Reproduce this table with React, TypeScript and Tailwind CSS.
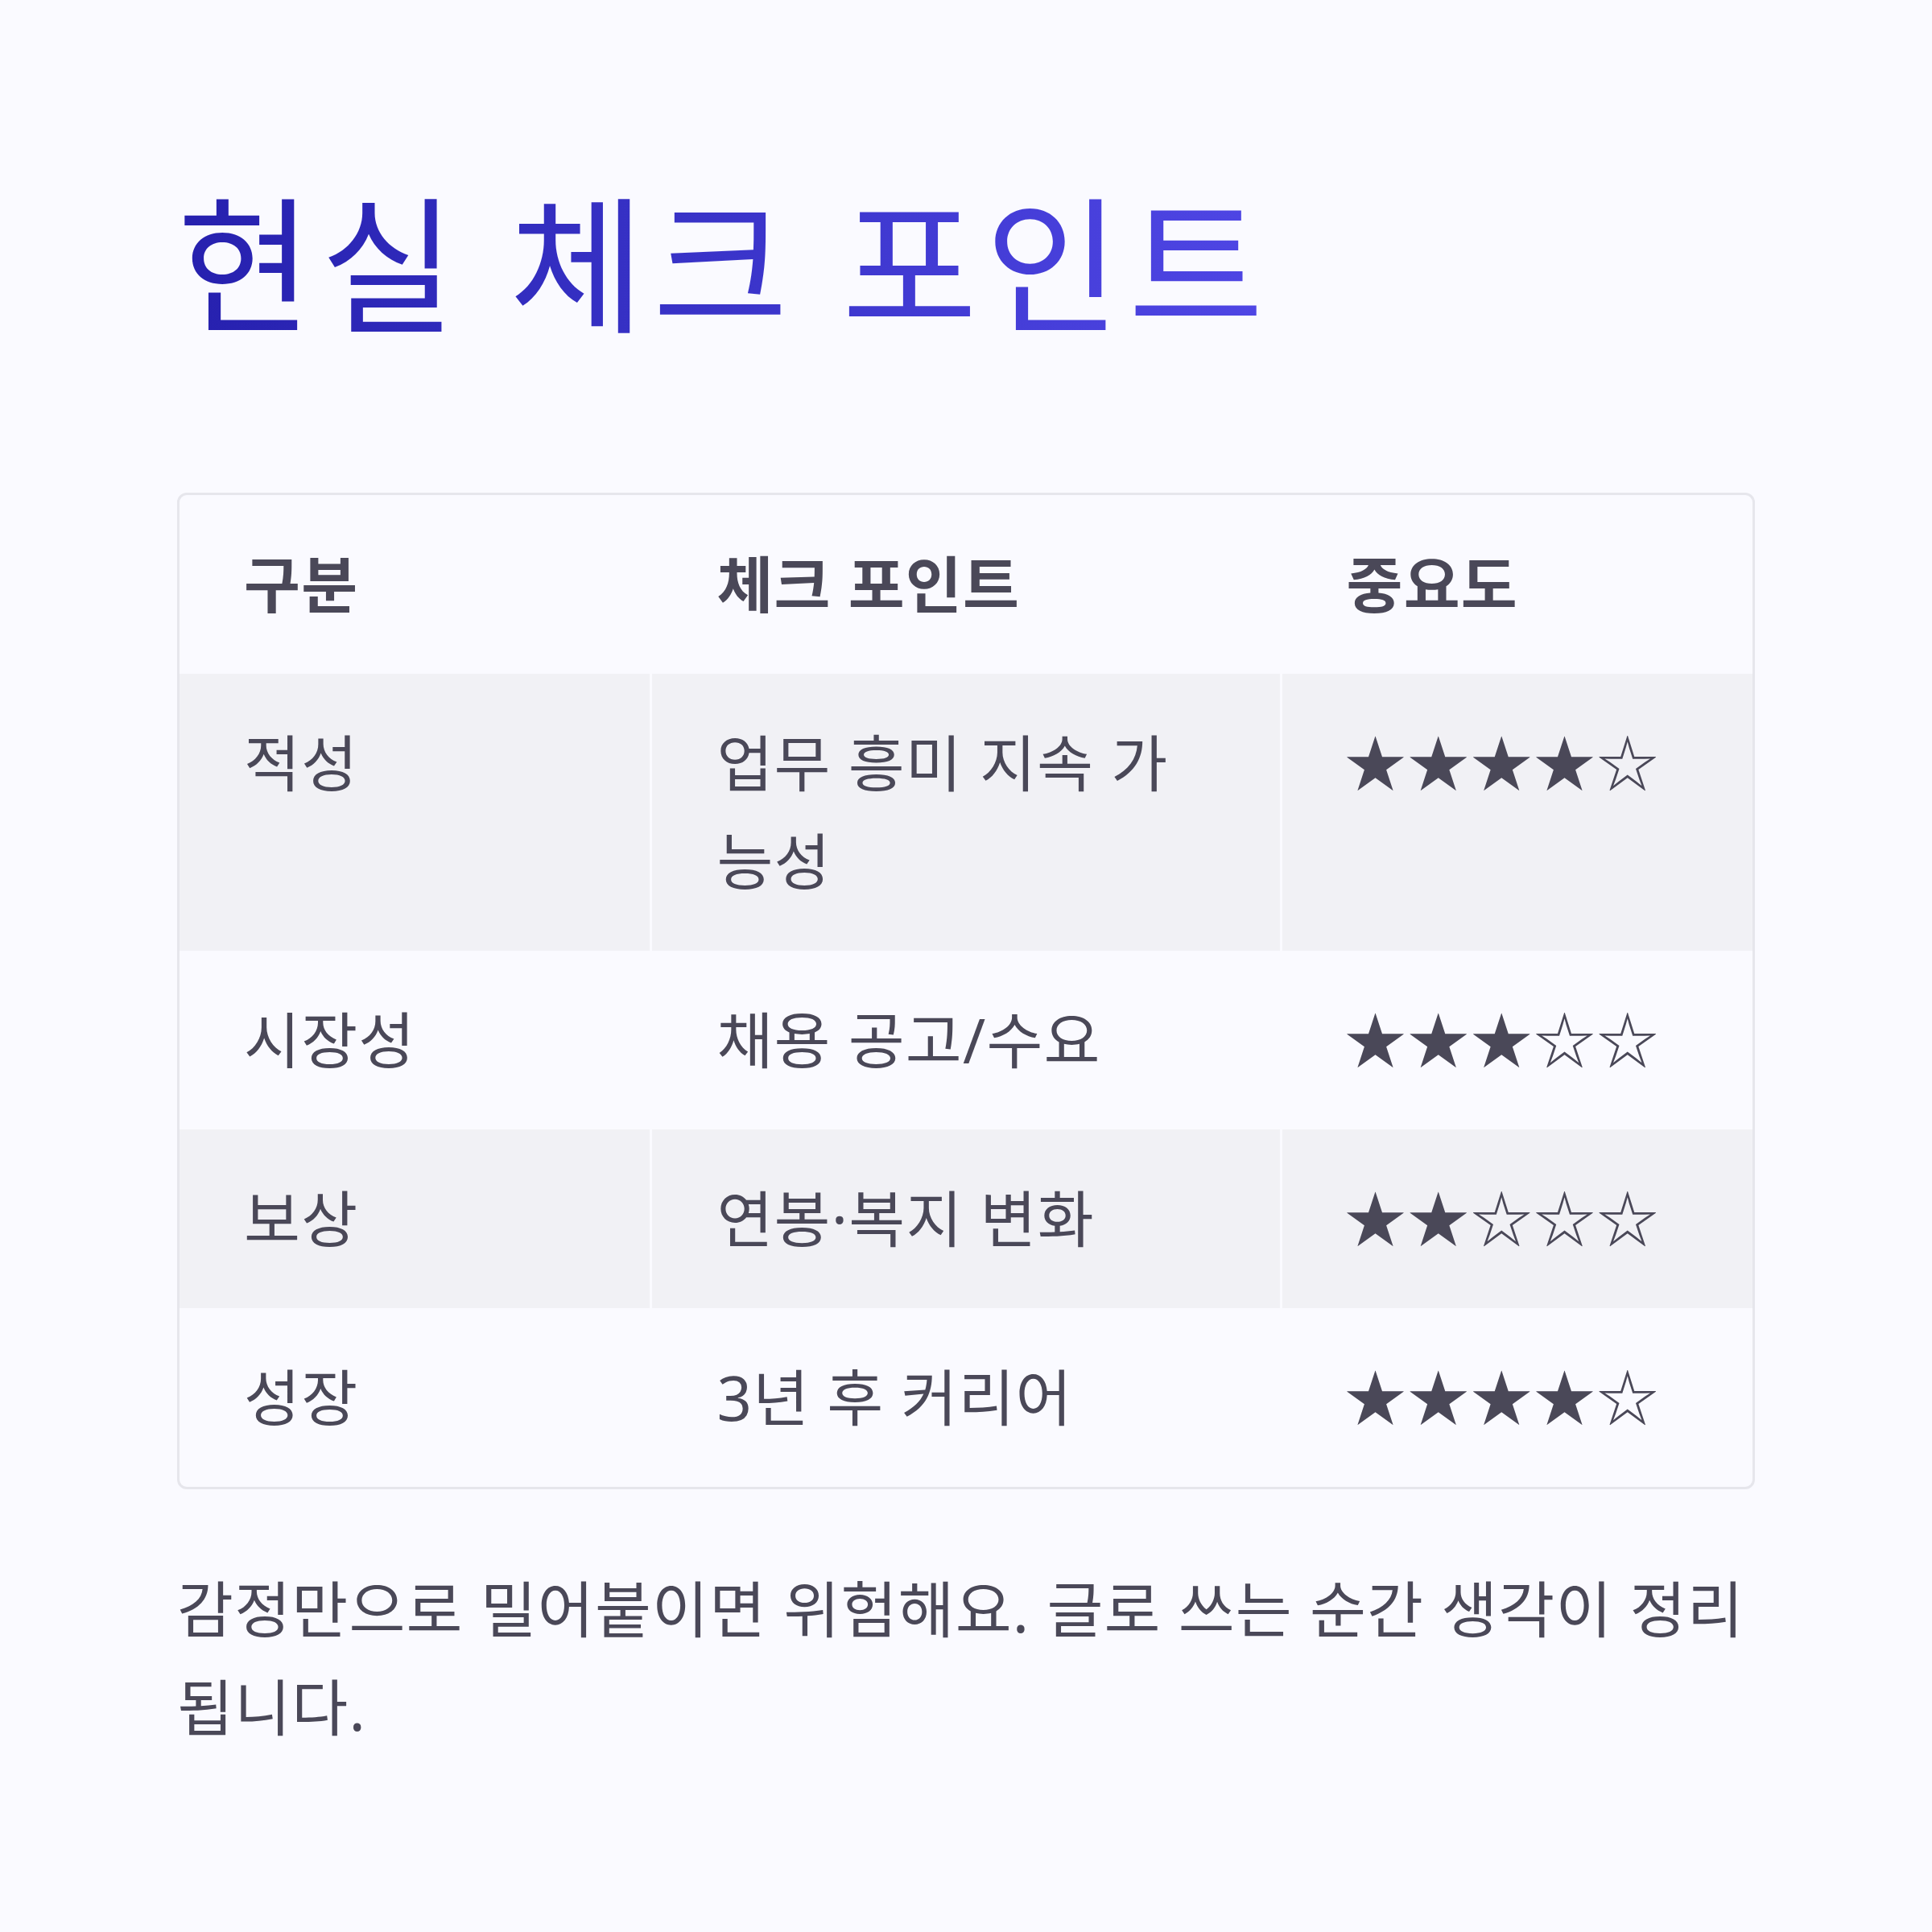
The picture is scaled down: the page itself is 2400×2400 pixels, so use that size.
import React from 'react';

interface Row {
  label: string;
  point: string;
  stars: number;
}

const rows: Row[] = [
  { label: '적성', point: '업무 흥미 지속 가능성', stars: 4 },
  { label: '시장성', point: '채용 공고/수요', stars: 3 },
  { label: '보상', point: '연봉·복지 변화', stars: 2 },
  { label: '성장', point: '3년 후 커리어', stars: 4 },
];

const font = { fontFamily: '"Noto Sans", "Noto Sans CJK KR", sans-serif' };

const Stars = ({ count }: { count: number }) => (
  <span>{'★'.repeat(count) + '☆'.repeat(5 - count)}</span>
);

export default function App() {
  return (
    <div
      style={font}
      className="w-[2400px] h-[2400px] bg-[#fafaff] px-[220px] pt-[219px] text-[#4a4858]"
    >
      <h1 className="inline-block text-[183px] leading-[1.2] tracking-[0.052em] font-normal bg-gradient-to-r from-[#2620ae] to-[#4f46e5] bg-clip-text text-transparent">
        현실 체크 포인트
      </h1>

      {/* table */}
      <div className="mt-[173px] border-[3px] border-[#e6e6ec] rounded-[12px] overflow-hidden text-[76px] leading-[122px] tracking-[0.016em]">
        <div className="grid grid-cols-[3fr_4fr_3fr] gap-x-[3px] font-bold">
          <div className="px-[80px] py-[50px]">구분</div>
          <div className="px-[80px] py-[50px]">체크 포인트</div>
          <div className="px-[80px] py-[50px]">중요도</div>
        </div>
        {rows.map((row, i) => {
          const cell = i % 2 === 0 ? 'bg-[#f1f1f5]' : '';
          return (
            <div key={row.label} className="grid grid-cols-[3fr_4fr_3fr] gap-x-[3px]">
              <div className={`px-[80px] py-[50px] ${cell}`}>{row.label}</div>
              <div className={`px-[80px] py-[50px] ${cell}`}>{row.point}</div>
              <div className={`px-[78px] py-[50px] tracking-[0.03em] ${cell}`}>
                <Stars count={row.stars} />
              </div>
            </div>
          );
        })}
      </div>

      <p className="mt-[88px] text-[76px] leading-[122px] tracking-[0.016em]">
        감정만으로 밀어붙이면 위험해요. 글로 쓰는 순간 생각이 정리됩니다.
      </p>
    </div>
  );
}
